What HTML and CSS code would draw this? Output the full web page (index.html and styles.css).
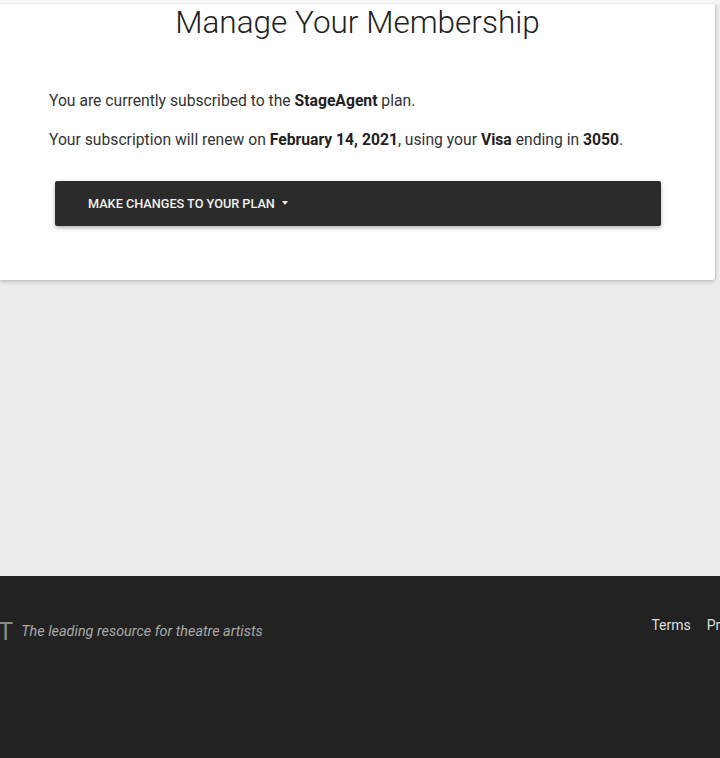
FILE: index.html
```html
<!DOCTYPE html>
<html lang="en">
<head>
<meta charset="utf-8">
<title>Manage Your Membership</title>
<link rel="stylesheet" href="styles.css">
</head>
<body>
<div class="page">
  <main class="main">
    <section class="card">
      <h1 class="title">Manage Your Membership</h1>
      <p class="line line-first">You are currently subscribed to the <b>StageAgent</b> plan.</p>
      <p class="line">Your subscription will renew on <b>February 14, 2021</b>, using your <b>Visa</b> ending in <b>3050</b>.</p>
      <button class="plan-btn" type="button">MAKE CHANGES TO YOUR PLAN <span class="caret"></span></button>
    </section>
  </main>
  <footer class="footer">
    <div class="brand">
      <span class="logo">T</span>
      <span class="tagline">The leading resource for theatre artists</span>
    </div>
    <nav class="links">
      <a href="#">Terms</a>
      <a href="#">Privacy</a>
    </nav>
  </footer>
</div>
</body>
</html>
```

FILE: styles.css
```css
* { box-sizing: border-box; }
html, body { margin: 0; padding: 0; }
body {
  font-family: Roboto, "Liberation Sans", Arial, sans-serif;
  background: #ededed;
  color: #333;
  overflow: hidden;
  width: 720px;
  height: 758px;
}
.page {
  display: flex;
  flex-direction: column;
  height: 758px;
}
.main {
  flex: 0 0 576px;
  background: #ededed;
  border-top: 4px solid #f7f7f7;
}
.card {
  width: 715px;
  height: 276px;
  background: #fff;
  box-shadow: 0 2px 4px rgba(0,0,0,0.18), 1px 0 2px rgba(0,0,0,0.08);
  border-radius: 0 0 3px 0;
  padding: 0 0 0 49px;
  display: flex;
  flex-direction: column;
}
.title {
  margin: 0 0 0 -49px;
  font-size: 31.5px;
  font-weight: 300;
  color: #222;
  text-align: center;
  line-height: 38px;
}
.line {
  margin: 0;
  font-size: 15.7px;
  line-height: 20px;
  color: #333;
}
.line b { font-weight: 700; color: #222; }
.line-first { margin-top: 49px; }
.line + .line { margin-top: 19px; }
.plan-btn {
  margin: 31px 0 0 6px;
  width: 606px;
  height: 45px;
  background: #2b2b2b;
  color: #f2f2f2;
  border: 0;
  border-radius: 2px;
  box-shadow: 0 2px 4px rgba(0,0,0,0.3);
  font-family: Roboto, "Liberation Sans", Arial, sans-serif;
  font-size: 12.7px;
  font-weight: 500;
  text-align: left;
  padding: 0 0 0 33px;
  display: flex;
  align-items: center;
  gap: 5px;
}
.caret {
  display: inline-block;
  width: 0;
  height: 0;
  border-left: 3.5px solid transparent;
  border-right: 3.5px solid transparent;
  border-top: 4px solid #f2f2f2;
  margin-top: -1px;
  margin-left: 2px;
}
.footer {
  flex: 1;
  background: #222;
  display: flex;
  justify-content: space-between;
  align-items: flex-start;
  padding-top: 40px;
  overflow: hidden;
  white-space: nowrap;
}
.brand {
  display: flex;
  align-items: center;
  margin-left: -2px;
  margin-top: 1px;
}
.logo {
  font-family: "Liberation Sans", Arial, sans-serif;
  font-size: 25px;
  color: #8a8a8a;
  line-height: 28px;
}
.tagline {
  font-style: italic;
  font-size: 14.4px;
  color: #a9a9a9;
  margin-left: 8px;
}
.links {
  display: flex;
  gap: 16px;
  margin-right: -32px;
  margin-top: 0;
}
.links a {
  color: #dedede;
  text-decoration: none;
  font-size: 14px;
  line-height: 18px;
}
```
